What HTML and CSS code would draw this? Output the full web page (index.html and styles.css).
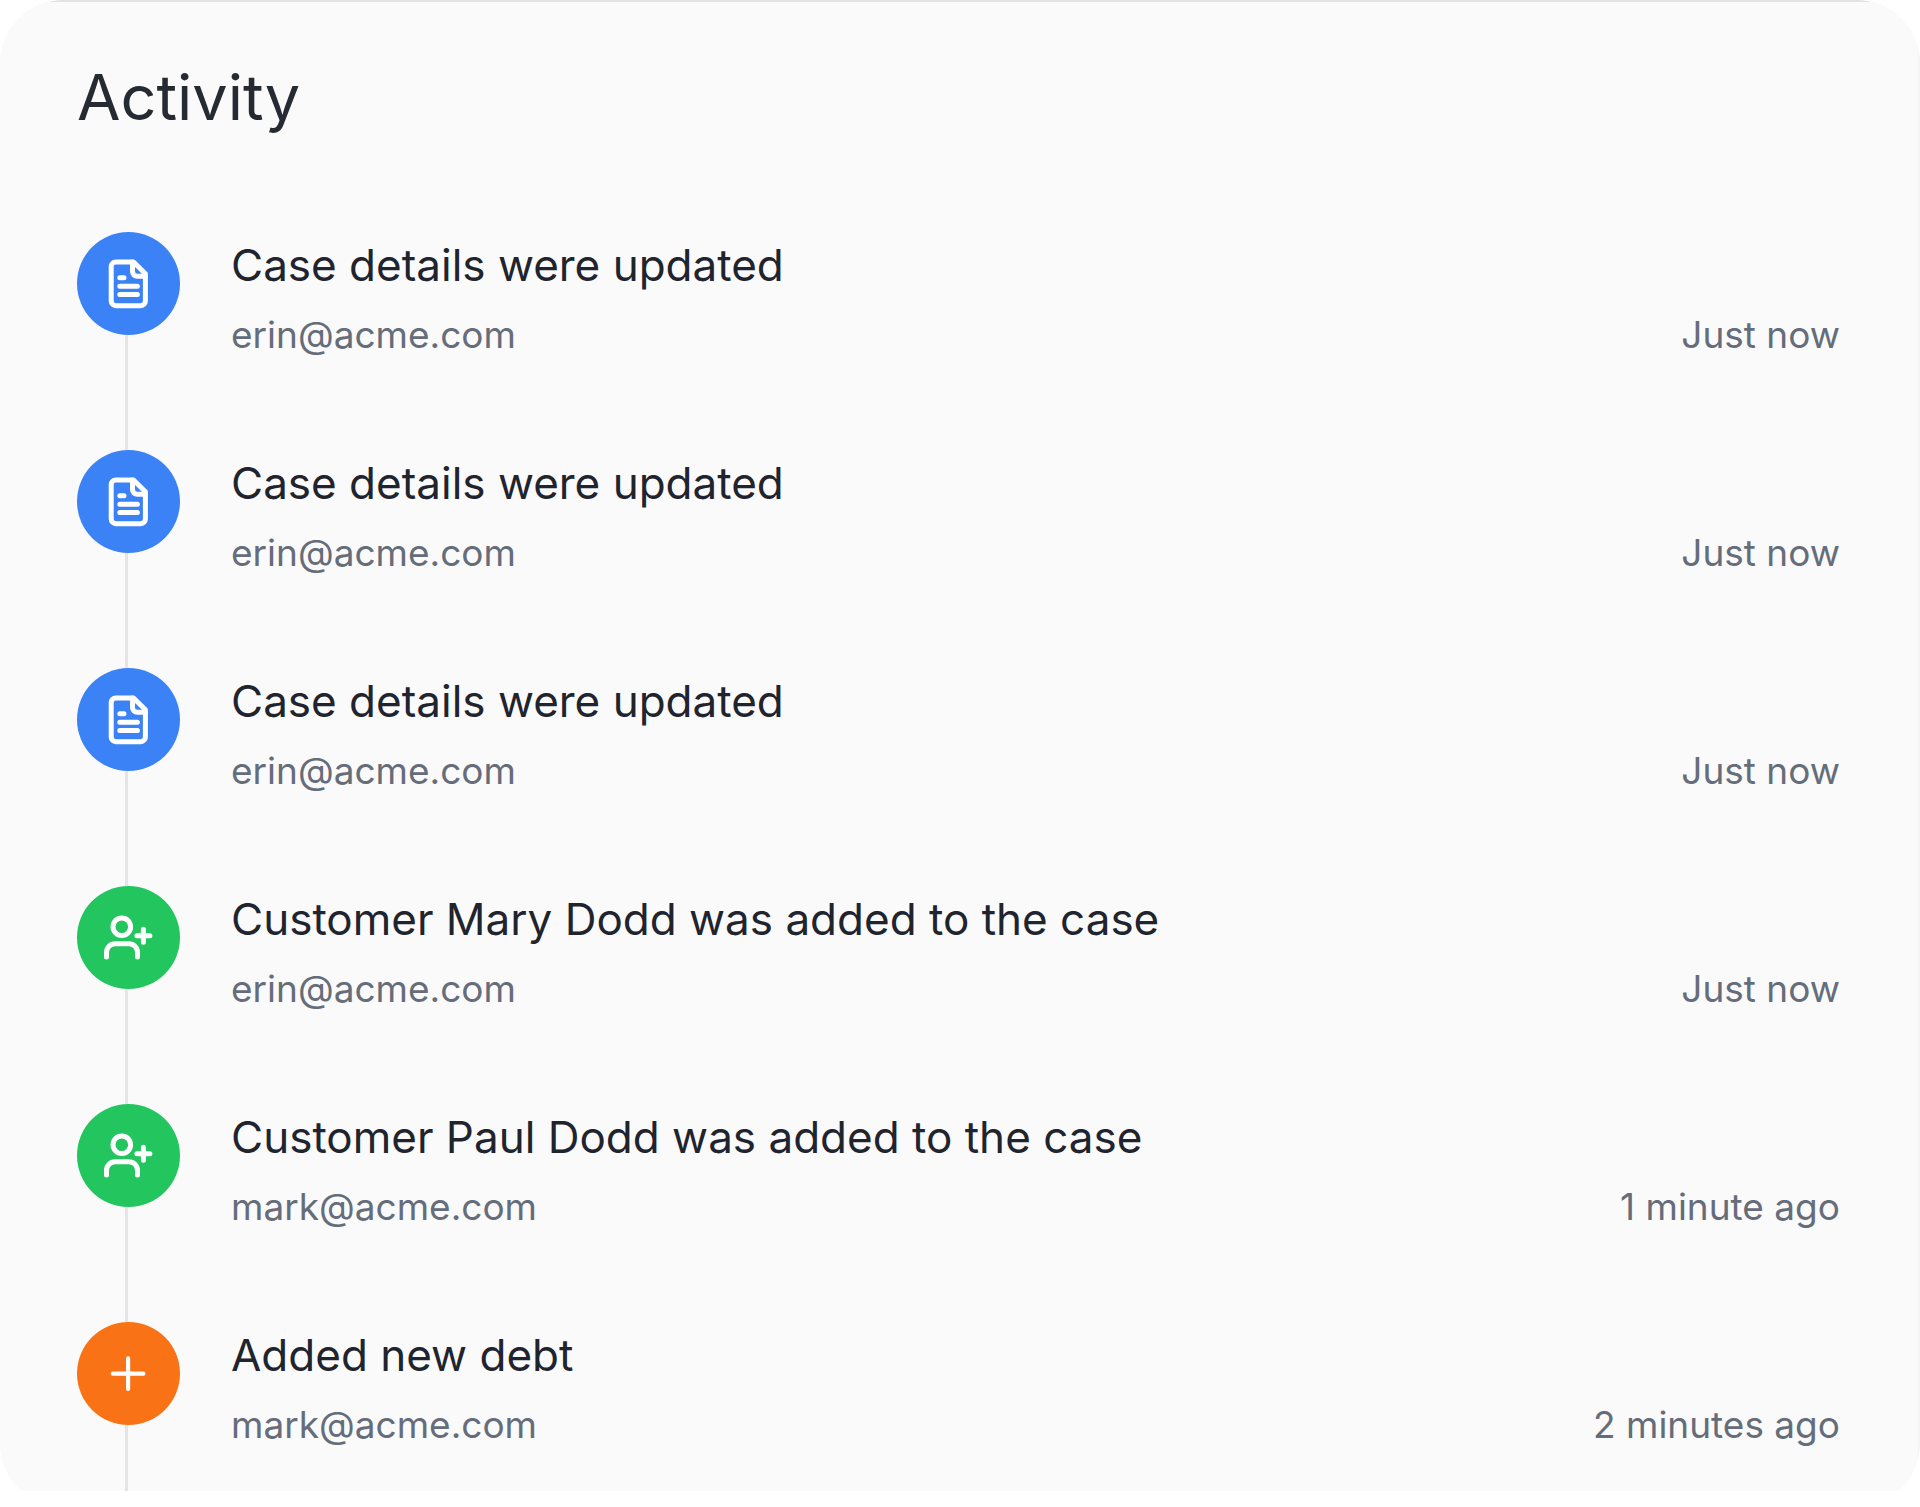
FILE: index.html
```html
<!DOCTYPE html>
<html lang="en">
<head>
  <meta charset="UTF-8" />
  <meta name="viewport" content="width=device-width, initial-scale=1.0"/>
  <title>Activity</title>
  <link rel="stylesheet" href="styles.css">
</head>
<body>

  <!-- shared icons -->
  <svg class="sprite" aria-hidden="true">
    <symbol id="icon-file" viewBox="0 0 103 103">
      <path d="M56.5 30H38.8a4.6 4.6 0 0 0-4.6 4.6v34.5a4.6 4.6 0 0 0 4.6 4.6h25a4.6 4.6 0 0 0 4.6-4.6V41.8z"/>
      <path d="M55.5 30v9.5a4.8 4.8 0 0 0 4.8 4.8h8"/>
      <path d="M42.8 45.7h4.2M42.8 54.2h17.6M42.8 62.6h17.6"/>
    </symbol>
    <symbol id="icon-user" viewBox="0 0 103 103">
      <circle cx="44.8" cy="40.8" r="8.8"/>
      <path d="M29.5 71v-4.6a8.6 8.6 0 0 1 8.6-8.6h13.8a8.6 8.6 0 0 1 8.6 8.6V71"/>
      <path d="M59.9 49.8h13M66.4 43.3v13"/>
    </symbol>
    <symbol id="icon-plus" viewBox="0 0 103 103">
      <path d="M35.8 51.7h30.6M51.1 36.4V67" stroke-width="4.2"/>
    </symbol>
  </svg>

  <main class="page">
    <section class="card">
      <h1>Activity</h1>
      <ul class="timeline">
        <li class="event">
          <div class="marker">
            <span class="dot blue"><svg><use href="#icon-file"/></svg></span>
          </div>
          <div class="event-body">
            <h2>Case details were updated</h2>
            <div class="meta"><span>erin@acme.com</span><span>Just now</span></div>
          </div>
        </li>
        <li class="event">
          <div class="marker">
            <span class="dot blue"><svg><use href="#icon-file"/></svg></span>
          </div>
          <div class="event-body">
            <h2>Case details were updated</h2>
            <div class="meta"><span>erin@acme.com</span><span>Just now</span></div>
          </div>
        </li>
        <li class="event">
          <div class="marker">
            <span class="dot blue"><svg><use href="#icon-file"/></svg></span>
          </div>
          <div class="event-body">
            <h2>Case details were updated</h2>
            <div class="meta"><span>erin@acme.com</span><span>Just now</span></div>
          </div>
        </li>
        <li class="event">
          <div class="marker">
            <span class="dot green"><svg><use href="#icon-user"/></svg></span>
          </div>
          <div class="event-body">
            <h2>Customer Mary Dodd was added to the case</h2>
            <div class="meta"><span>erin@acme.com</span><span>Just now</span></div>
          </div>
        </li>
        <li class="event">
          <div class="marker">
            <span class="dot green"><svg><use href="#icon-user"/></svg></span>
          </div>
          <div class="event-body">
            <h2>Customer Paul Dodd was added to the case</h2>
            <div class="meta"><span>mark@acme.com</span><span>1 minute ago</span></div>
          </div>
        </li>
        <li class="event">
          <div class="marker">
            <span class="dot orange"><svg><use href="#icon-plus"/></svg></span>
          </div>
          <div class="event-body">
            <h2>Added new debt</h2>
            <div class="meta"><span>mark@acme.com</span><span>2 minutes ago</span></div>
          </div>
        </li>
      </ul>
    </section>
  </main>

</body>
</html>
```

FILE: styles.css
```css
* {
  box-sizing: border-box;
}

body {
  font-family: Inter, sans-serif;
  margin: 0;
  background: #fff;
}

h1, h2 {
  margin: 0;
  font-weight: 400;
}

.sprite {
  display: none;
}

/* the card runs past the bottom of the page and is cut off there */
.page {
  height: calc(100vh - 16px);
  overflow: hidden;
}

/* hairlines on the top and right edges only, clipped by the round corners */
.card {
  height: 100vh;
  overflow: hidden;
  padding: 57px 80px 0 77px;
  background:
    linear-gradient(#e2e2e2, #e2e2e2) top / 100% 2px no-repeat,
    linear-gradient(#f5f5f5, #f5f5f5) right / 2px 100% no-repeat,
    #fafafa;
  border-radius: 64px;
}

h1 {
  font-size: 63px;
  line-height: 80px;
  color: #262a33;
}

.timeline {
  list-style: none;
  margin: 95px 0 0;
  padding: 0;
}

.event {
  display: flex;
  gap: 51px;
  height: 218px;
}

.marker {
  display: flex;
  flex-direction: column;
  width: 103px;
}

/* connector to the next event */
.marker::after {
  content: "";
  flex: 1;
  width: 3px;
  margin-left: 48px;
  background: #e5e5e5;
}

.dot {
  height: 103px;
  border-radius: 50%;
}

.dot svg {
  display: block;
  width: 100%;
  height: 100%;
  fill: none;
  stroke: #fff;
  stroke-width: 5;
  stroke-linecap: round;
  stroke-linejoin: round;
}

.blue {
  background: #3b82f6;
}

.green {
  background: #22c55e;
}

.orange {
  background: #f97316;
}

.event-body {
  flex: 1;
}

h2 {
  padding-top: 3px;
  font-size: 44px;
  line-height: 60px;
  color: #1f242e;
}

.meta {
  display: flex;
  justify-content: space-between;
  margin-top: 14px;
  font-size: 37px;
  line-height: 52px;
  color: #666d7a;
}
```
